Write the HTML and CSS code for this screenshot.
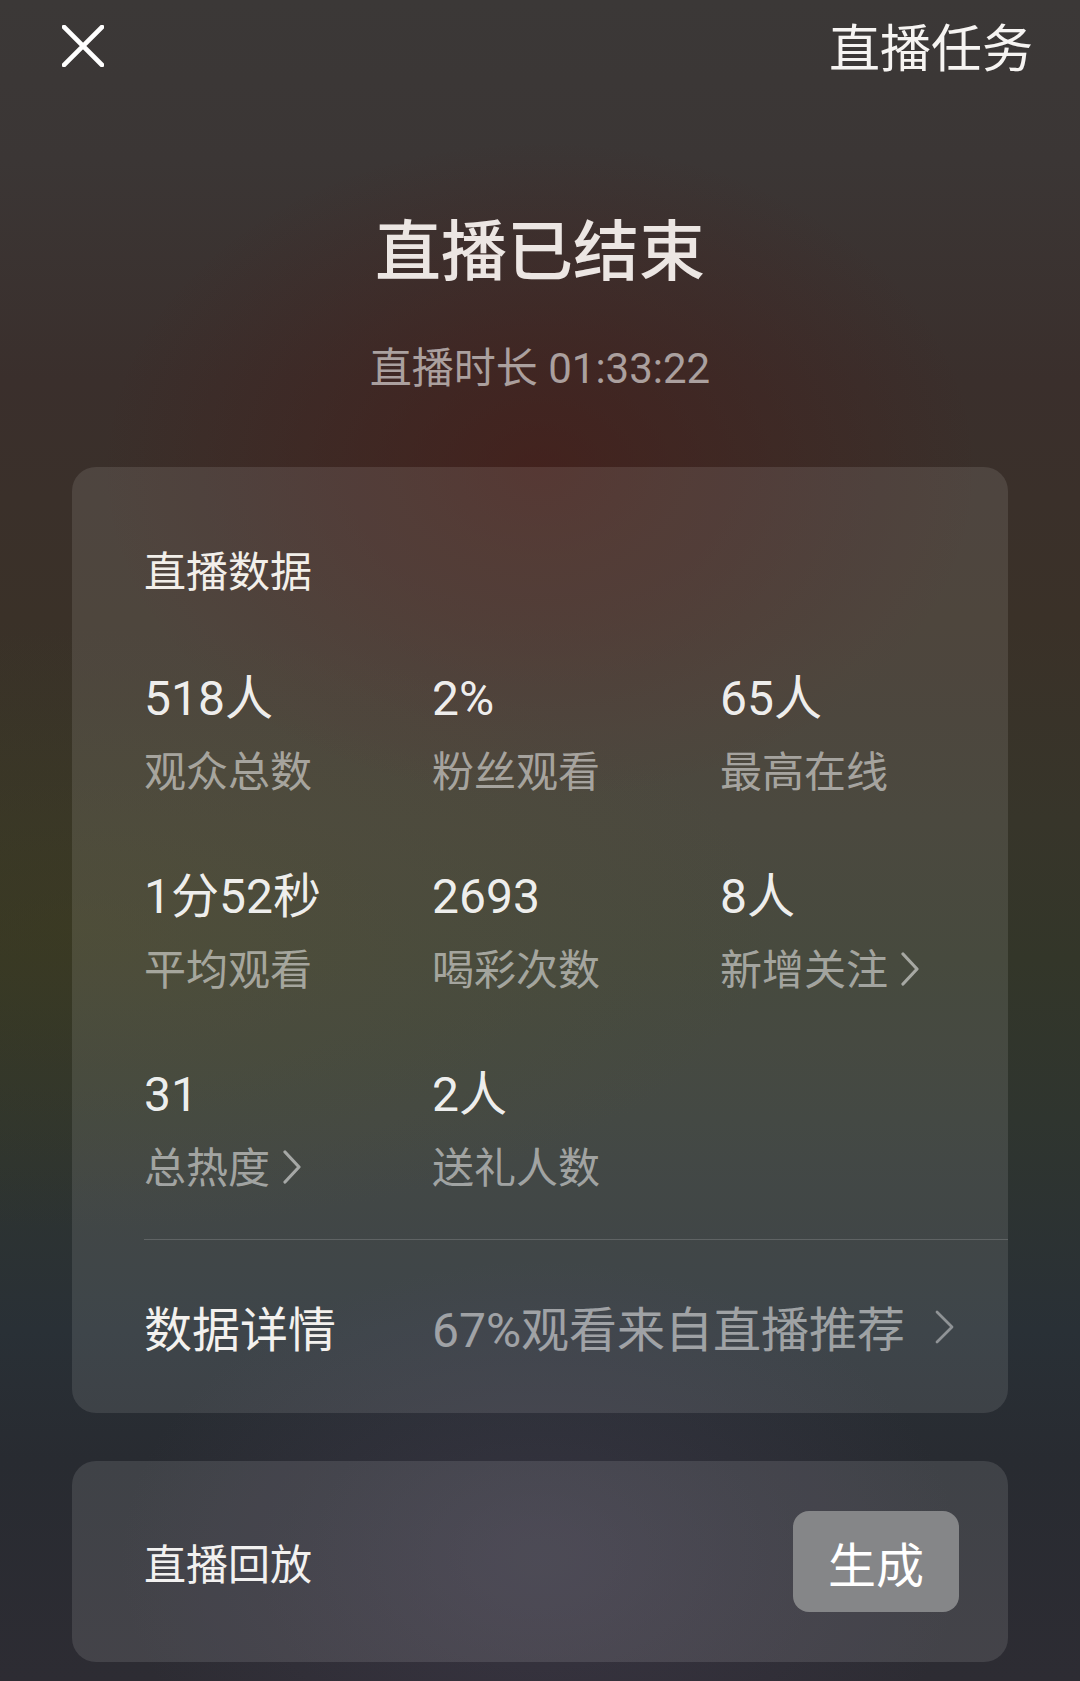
FILE: index.html
```html
<!DOCTYPE html>
<html lang="zh-CN">
<head>
<meta charset="utf-8">
<title>直播已结束</title>
<link rel="stylesheet" href="styles.css">
</head>
<body>
<div class="screen">
  <header class="topbar">
    <svg class="close" width="42" height="42" viewBox="0 0 42 42" aria-label="关闭">
      <path d="M2 2 L40 40 M40 2 L2 40" stroke="#ffffff" stroke-width="4.6" stroke-linecap="square" fill="none"/>
    </svg>
    <span class="task">直播任务</span>
  </header>

  <section class="summary">
    <h1 class="title">直播已结束</h1>
    <p class="duration">直播时长 01:33:22</p>
  </section>

  <section class="card stats">
    <h2 class="card-title">直播数据</h2>
    <div class="grid">
      <div class="stat"><div class="value">518人</div><div class="label">观众总数</div></div>
      <div class="stat"><div class="value">2%</div><div class="label">粉丝观看</div></div>
      <div class="stat"><div class="value">65人</div><div class="label">最高在线</div></div>
      <div class="stat"><div class="value">1分52秒</div><div class="label">平均观看</div></div>
      <div class="stat"><div class="value">2693</div><div class="label">喝彩次数</div></div>
      <div class="stat"><div class="value">8人</div><div class="label link">新增关注<svg class="chev" width="20" height="34" viewBox="0 0 20 34"><path d="M3 2 L17 17 L3 32" stroke="currentColor" stroke-width="3.2" fill="none" stroke-linecap="round" stroke-linejoin="round"/></svg></div></div>
      <div class="stat"><div class="value">31</div><div class="label link">总热度<svg class="chev" width="20" height="34" viewBox="0 0 20 34"><path d="M3 2 L17 17 L3 32" stroke="currentColor" stroke-width="3.2" fill="none" stroke-linecap="round" stroke-linejoin="round"/></svg></div></div>
      <div class="stat"><div class="value">2人</div><div class="label">送礼人数</div></div>
    </div>
    <div class="divider"></div>
    <div class="detail-row">
      <span class="detail-name">数据详情</span>
      <span class="detail-value">67%观看来自直播推荐</span>
      <svg class="detail-chev" width="22" height="34" viewBox="0 0 22 34"><path d="M3 2 L18 17 L3 32" stroke="currentColor" stroke-width="2.8" fill="none" stroke-linecap="round" stroke-linejoin="round"/></svg>
    </div>
  </section>

  <section class="card replay">
    <span class="replay-name">直播回放</span>
    <button class="gen-btn" type="button">生成</button>
  </section>
</div>
</body>
</html>
```

FILE: styles.css
```css
html, body {
  margin: 0;
  padding: 0;
}

body {
  width: 1080px;
  height: 1681px;
  overflow: hidden;
  font-family: "Noto Sans CJK SC", "Noto Sans", sans-serif;
  color: #f2efea;
  background-color: #2e2d33;
  background-image:
    radial-gradient(ellipse 440px 330px at 540px 470px, rgba(72, 26, 22, 0.62), rgba(72, 26, 22, 0) 100%),
    radial-gradient(ellipse 700px 300px at 80px 930px, rgba(66, 62, 28, 0.45), rgba(66, 62, 28, 0) 100%),
    radial-gradient(ellipse 420px 300px at 540px 1560px, rgba(80, 70, 95, 0.35), rgba(80, 70, 95, 0) 100%),
    linear-gradient(to bottom, #3b3837 0px, #3b3635 160px, #3a2f2c 380px, #3a3128 620px, #37352a 820px, #333629 960px, #2f352f 1120px, #293036 1330px, #282b31 1460px, #2d2c33 1681px);
}

.screen {
  width: 1080px;
  height: 1681px;
  display: flex;
  flex-direction: column;
}

/* numbers use a Latin face with wider digits; CJK falls back */
.value,
.duration,
.detail-value {
  font-family: Roboto, "Noto Sans CJK SC", "Noto Sans", sans-serif;
}

/* top bar */
.topbar {
  height: 100px;
  display: flex;
  justify-content: space-between;
  align-items: flex-start;
  padding: 0 47px 0 62px;
}

.close {
  display: block;
  margin-top: 25px;
}

.task {
  margin-top: 20px;
  font-size: 51px;
  line-height: 51px;
  color: #f6f4f2;
}

/* summary */
.summary {
  display: flex;
  flex-direction: column;
  align-items: center;
}

.title {
  margin: 113px 0 0;
  font-size: 66px;
  line-height: 66px;
  font-weight: 500;
  color: #ece6e3;
}

.duration {
  margin: 69px 0 0;
  font-size: 42px;
  line-height: 42px;
  color: rgba(255, 255, 255, 0.56);
}

/* cards */
.card {
  margin: 0 72px;
  border-radius: 24px;
  background: rgba(255, 255, 255, 0.1);
}

.stats {
  margin-top: 77px;
  padding: 81px 0 0 72px;
  height: 946px;
  box-sizing: border-box;
  display: flex;
  flex-direction: column;
}

.card-title {
  margin: 0;
  font-size: 42px;
  line-height: 42px;
  font-weight: 400;
  color: #f2efea;
}

.grid {
  margin-top: 85px;
  display: grid;
  grid-template-columns: 288px 288px 288px;
  row-gap: 83px;
}

.stat {
  display: flex;
  flex-direction: column;
}

.value {
  font-size: 48px;
  line-height: 48px;
  color: rgba(255, 255, 255, 0.93);
}

.label {
  margin-top: 25px;
  font-size: 42px;
  line-height: 42px;
  color: rgba(255, 255, 255, 0.52);
  display: flex;
  align-items: center;
}

.chev {
  margin-left: 12px;
  margin-top: 4px;
}

.divider {
  margin-top: 53px;
  height: 1px;
  background: rgba(255, 255, 255, 0.16);
}

.detail-row {
  flex: 1;
  display: grid;
  grid-template-columns: 288px 1fr auto;
  align-items: center;
  padding-right: 52px;
  padding-bottom: 1px;
}

.detail-name {
  font-size: 48px;
  line-height: 48px;
  color: #f3f1ee;
}

.detail-value {
  margin-top: 9px;
  font-size: 48px;
  line-height: 48px;
  color: rgba(255, 255, 255, 0.5);
}

.detail-chev {
  display: block;
  color: rgba(255, 255, 255, 0.42);
  margin-top: 2px;
}

.replay {
  margin-top: 48px;
  height: 201px;
  box-sizing: border-box;
  padding: 0 49px 0 72px;
  display: flex;
  justify-content: space-between;
  align-items: center;
  background: rgba(255, 255, 255, 0.11);
}

.replay-name {
  font-size: 42px;
  line-height: 42px;
  color: #f2f1f0;
}

.gen-btn {
  width: 166px;
  height: 101px;
  border: none;
  border-radius: 16px;
  background: #858688;
  color: #ffffff;
  font-family: "Noto Sans CJK SC", "Noto Sans", sans-serif;
  font-size: 48px;
  line-height: 48px;
  padding: 0;
}
```
